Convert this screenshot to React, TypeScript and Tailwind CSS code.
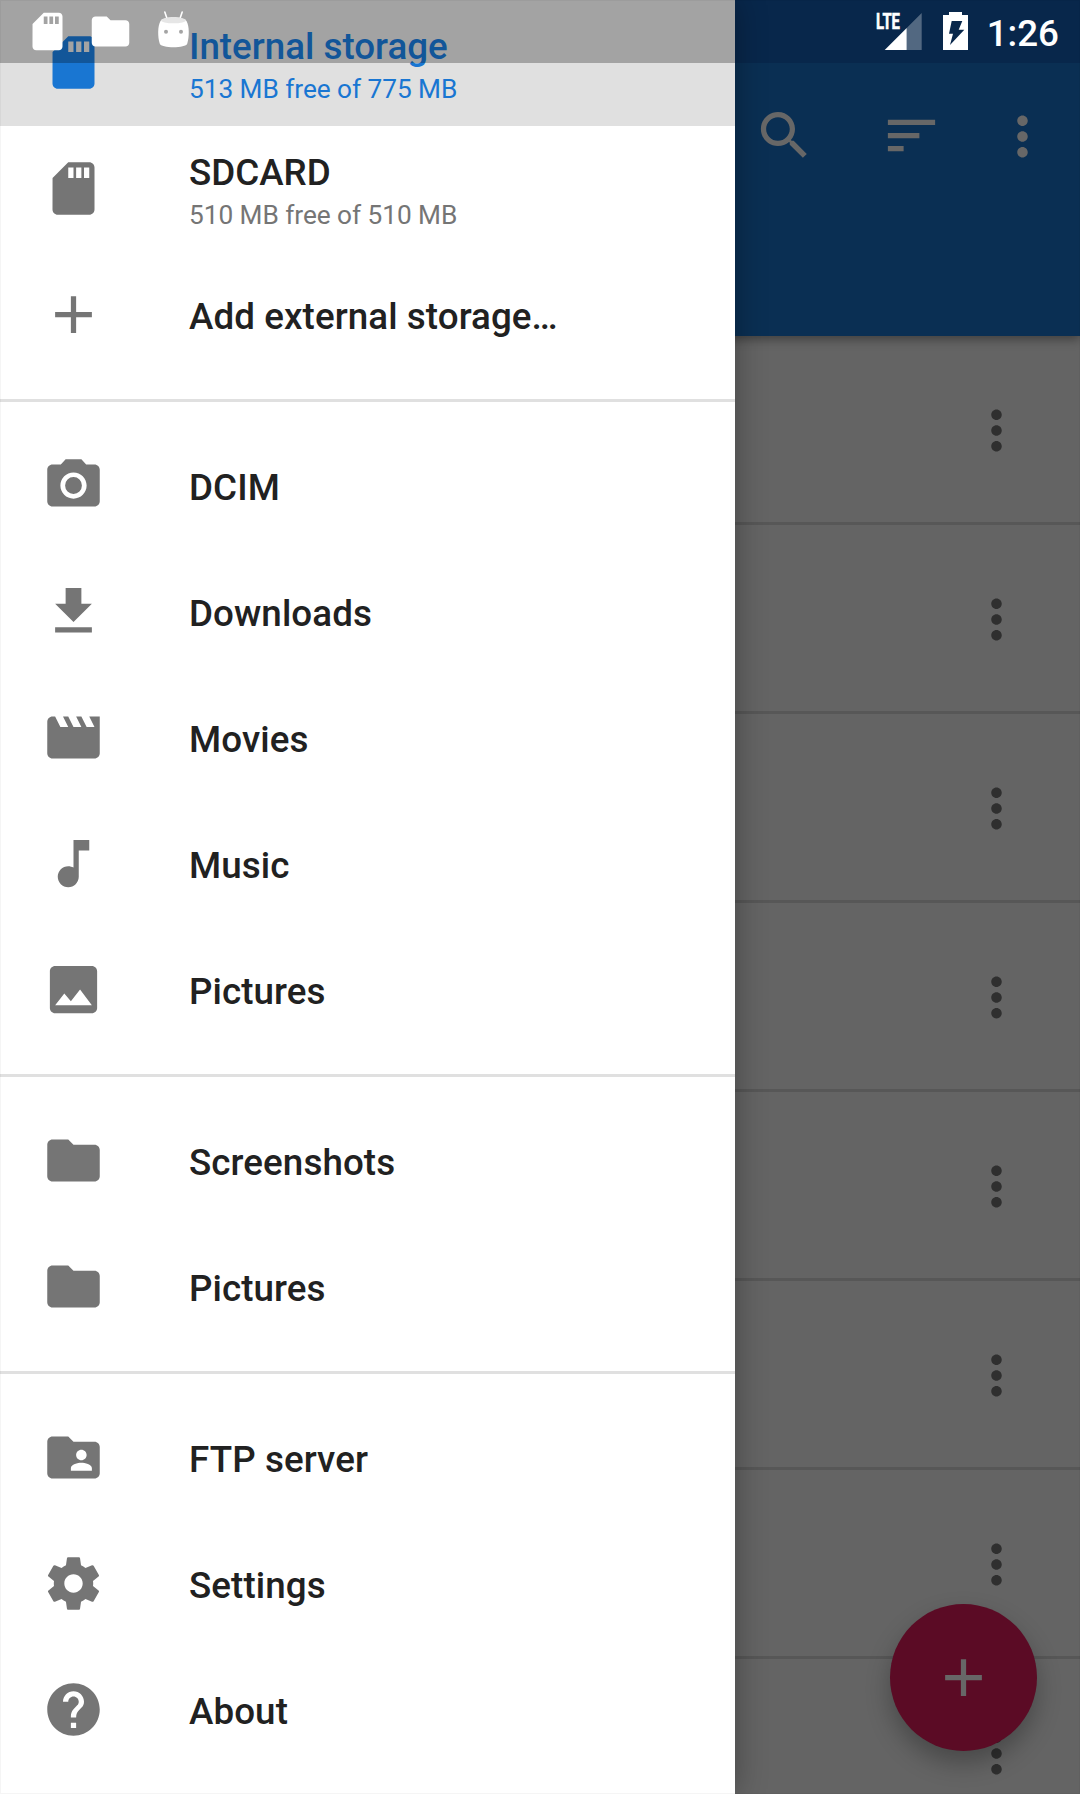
import React from "react";

const PATHS = {
  sd: "M18 2h-8L4.02 8 4 20c0 1.1.9 2 2 2h12c1.1 0 2-.9 2-2V4c0-1.1-.9-2-2-2zm-6 6h-2V4h2v4zm3 0h-2V4h2v4zm3 0h-2V4h2v4z",
  add: "M19 13h-6v6h-2v-6H5v-2h6V5h2v6h6v2z",
  camera:
    "M12 8.8a3.2 3.2 0 1 0 0 6.4 3.2 3.2 0 1 0 0-6.4zM9 2L7.17 4H4c-1.1 0-2 .9-2 2v12c0 1.1.9 2 2 2h16c1.1 0 2-.9 2-2V6c0-1.1-.9-2-2-2h-3.17L15 2H9zm3 15c-2.76 0-5-2.24-5-5s2.24-5 5-5 5 2.24 5 5-2.24 5-5 5z",
  download: "M19 9h-4V3H9v6H5l7 7 7-7zM5 18v2h14v-2H5z",
  movie:
    "M18 4l2 4h-3l-2-4h-2l2 4h-3l-2-4H8l2 4H7L5 4H4c-1.1 0-1.99.9-1.99 2L2 18c0 1.1.9 2 2 2h16c1.1 0 2-.9 2-2V4h-4z",
  music:
    "M12 3v10.55c-.59-.34-1.27-.55-2-.55-2.21 0-4 1.79-4 4s1.79 4 4 4 4-1.79 4-4V7h4V3h-6z",
  image:
    "M21 19V5c0-1.1-.9-2-2-2H5c-1.1 0-2 .9-2 2v14c0 1.1.9 2 2 2h14c1.1 0 2-.9 2-2zM8.5 13.5l2.5 3.01L14.5 12l4.5 6H5l3.5-4.5z",
  folder:
    "M10 4H4c-1.1 0-1.99.9-1.99 2L2 18c0 1.1.9 2 2 2h16c1.1 0 2-.9 2-2V8c0-1.1-.9-2-2-2h-8l-2-2z",
  folderShared:
    "M20 6h-8l-2-2H4c-1.1 0-1.99.9-1.99 2L2 18c0 1.1.9 2 2 2h16c1.1 0 2-.9 2-2V8c0-1.1-.9-2-2-2zm-5 3c1.1 0 2 .9 2 2s-.9 2-2 2-2-.9-2-2 .9-2 2-2zm4 8h-8v-1c0-1.33 2.67-2 4-2s4 .67 4 2v1z",
  settings:
    "M19.43 12.98c.04-.32.07-.64.07-.98s-.03-.66-.07-.98l2.11-1.65c.19-.15.24-.42.12-.64l-2-3.46c-.12-.22-.39-.3-.61-.22l-2.49 1c-.52-.4-1.08-.73-1.69-.98l-.38-2.65C14.46 2.18 14.25 2 14 2h-4c-.25 0-.46.18-.49.42l-.38 2.65c-.61.25-1.17.59-1.69.98l-2.49-1c-.23-.09-.49 0-.61.22l-2 3.46c-.13.22-.07.49.12.64l2.11 1.65c-.04.32-.07.65-.07.98s.03.66.07.98l-2.11 1.65c-.19.15-.24.42-.12.64l2 3.46c.12.22.39.3.61.22l2.49-1c.52.4 1.08.73 1.69.98l.38 2.65c.03.24.24.42.49.42h4c.25 0 .46-.18.49-.42l.38-2.65c.61-.25 1.17-.59 1.69-.98l2.49 1c.23.09.49 0 .61-.22l2-3.46c.12-.22.07-.49-.12-.64l-2.11-1.65zM12 15.5c-1.93 0-3.5-1.57-3.5-3.5s1.57-3.5 3.5-3.5 3.5 1.57 3.5 3.5-1.57 3.5-3.5 3.5z",
  help: "M12 2C6.48 2 2 6.48 2 12s4.48 10 10 10 10-4.48 10-10S17.52 2 12 2zm1 17h-2v-2h2v2zm2.07-7.75l-.9.92C13.45 12.9 13 13.5 13 15h-2v-.5c0-1.1.45-2.1 1.17-2.83l1.24-1.26c.37-.36.59-.86.59-1.41 0-1.1-.9-2-2-2s-2 .9-2 2H8c0-2.21 1.79-4 4-4s4 1.79 4 4c0 .88-.36 1.68-.93 2.25z",
  more: "M12 8c1.1 0 2-.9 2-2s-.9-2-2-2-2 .9-2 2 .9 2 2 2zm0 2c-1.1 0-2 .9-2 2s.9 2 2 2 2-.9 2-2-.9-2-2-2zm0 6c-1.1 0-2 .9-2 2s.9 2 2 2 2-.9 2-2-.9-2-2-2z",
  search:
    "M15.5 14h-.79l-.28-.27C15.41 12.59 16 11.11 16 9.5 16 5.91 13.09 3 9.5 3S3 5.91 3 9.5 5.91 16 9.5 16c1.61 0 3.09-.59 4.23-1.57l.27.28v.79l5 4.99L20.49 19l-4.99-5zm-6 0C7.01 14 5 11.99 5 9.5S7.01 5 9.5 5 14 7.01 14 9.5 11.99 14 9.5 14z",
  sort: "M3 18h6v-2H3v2zM3 6v2h18V6H3zm0 7h12v-2H3v2z",
};

type IconName = keyof typeof PATHS;

function Icon({ name, className = "" }: { name: IconName; className?: string }) {
  return (
    <svg viewBox="0 0 24 24" fill="currentColor" fillRule="evenodd" className={`size-[63px] shrink-0 ${className}`}>
      <path d={PATHS[name]} />
    </svg>
  );
}

type Item = { icon: IconName; title: string; detail?: string; active?: boolean };

const GROUPS: Item[][] = [
  [
    { icon: "sd", title: "Internal storage", detail: "513 MB free of 775 MB", active: true },
    { icon: "sd", title: "SDCARD", detail: "510 MB free of 510 MB" },
    { icon: "add", title: "Add external storage…" },
  ],
  [
    { icon: "camera", title: "DCIM" },
    { icon: "download", title: "Downloads" },
    { icon: "movie", title: "Movies" },
    { icon: "music", title: "Music" },
    { icon: "image", title: "Pictures" },
  ],
  [
    { icon: "folder", title: "Screenshots" },
    { icon: "folder", title: "Pictures" },
  ],
  [
    { icon: "folderShared", title: "FTP server" },
    { icon: "settings", title: "Settings" },
    { icon: "help", title: "About" },
  ],
];

function DrawerItem({ icon, title, detail, active }: Item) {
  return (
    <li className={`flex h-[126px] items-center pl-[42px] ${active ? "bg-[#e0e0e0] text-[#1976d2]" : "text-[#212121]"}`}>
      <Icon name={icon} className={`mb-px ${active ? "" : "text-[#757575]"}`} />
      <div className={`ml-[84px] flex flex-col ${detail ? "pt-2" : "pt-0.5 tracking-[0.08px]"}`}>
        <span className="text-[36.75px] leading-[43px] font-medium whitespace-nowrap">{title}</span>
        {detail && (
          <span className={`text-[26.25px] leading-[42px] tracking-[-0.05px] whitespace-nowrap ${active ? "" : "text-[#757575]"}`}>{detail}</span>
        )}
      </div>
    </li>
  );
}

function Drawer() {
  return (
    <nav className="absolute inset-y-0 left-0 w-[735px] bg-white shadow-[0_0_30px_rgba(0,0,0,0.32)]">
      {GROUPS.map((group, i) => (
        <ul key={i} className={i > 0 ? "mt-[21px] border-t-[3px] border-[#e0e0e0] pt-[21px]" : ""}>
          {group.map((item, j) => (
            <DrawerItem key={j} {...item} />
          ))}
        </ul>
      ))}
    </nav>
  );
}

function StatusBar() {
  return (
    <div className="absolute inset-x-0 top-0 flex h-[63px] text-white">
      <div className="flex w-[735px] bg-black/27 pt-[8.5px] pl-[25px]">
        <svg viewBox="0 0 24 24" fill="currentColor" className="mr-[18px] size-[45px]">
          <path d={PATHS.sd} />
        </svg>
        <svg viewBox="0 0 24 24" fill="currentColor" className="mr-[18px] size-[45px]">
          <path d={PATHS.folder} />
        </svg>
        <svg viewBox="0 0 45 45" className="size-[45px]">
          <path d="M16 9.500l-2.200-6.500M29 9.500l2.200-6.500" stroke="#fff" strokeWidth="1.600" strokeLinecap="round" />
          <path d="M9.500 12C14 7 31 7 35.500 12C38.500 17 38.300 28 36.300 34.500C35 39.500 10 39.500 8.700 34.500C6.700 28 6.500 17 9.500 12z" fill="#fff" />
          <ellipse cx="22.500" cy="11.300" rx="12.500" ry="3" fill="#e6e6e6" />
          <circle cx="15" cy="22.800" r="2" fill="#a4a4a4" />
          <circle cx="30" cy="22.800" r="2" fill="#a4a4a4" />
        </svg>
      </div>
      <div className="flex flex-1 justify-end pt-3 pr-[21px]">
        <svg viewBox="0 -8 48 48" className="-mt-2 mr-[20px] h-12 w-12">
          <path d="M46.700 1v37H31.700V16z" fill="#fff" opacity=".3" />
          <path d="M9.700 38L31.700 16v22z" fill="#fff" />
          <text
            x="1"
            y="17"
            fontSize="22"
            fontWeight="700"
            fill="#fff"
            stroke="#fff"
            strokeWidth="0.6"
            textLength="24"
            lengthAdjust="spacingAndGlyphs"
          >
            LTE
          </text>
        </svg>
        <svg viewBox="0 0 26 38" className="mr-[18px] h-[38px] w-[26px]">
          <path fillRule="evenodd" fill="#fff" d="M6 0h13v3h6v35H0V3h6zM8.700 9h10.600l-3.600 8.700h5.600L7 33l3-11.300H6z" />
        </svg>
        <span className="text-[36.75px] leading-[43px] font-medium">1:26</span>
      </div>
    </div>
  );
}

export default function App() {
  return (
    <div className="relative h-[1794px] w-[1080px] overflow-hidden bg-[#646464] font-[Roboto,sans-serif]">
      <header className="relative h-[336px] bg-[#0a2f53] text-[#676767] shadow-[0_3px_10px_rgba(0,0,0,0.4)]">
        <div className="h-[63px] bg-[#08274b]" />
        <div className="flex h-[147px] items-center justify-end pr-[9px]">
          <div className="flex w-[126px] justify-center pr-0.5 pb-[3px]">
            <Icon name="search" />
          </div>
          <div className="flex w-[126px] justify-center pb-[3px]">
            <Icon name="sort" />
          </div>
          <div className="flex w-[97px] justify-center">
            <Icon name="more" />
          </div>
        </div>
      </header>
      <main>
        {Array.from({ length: 8 }, (_, i) => (
          <div key={i} className="flex h-[189px] items-center justify-end border-b-[3px] border-[#575757] pt-[3px] pr-[52px] text-[#2f2f2f]">
            <Icon name="more" />
          </div>
        ))}
      </main>
      <button className="absolute top-[1604px] left-[890px] flex size-[147px] items-center justify-center rounded-full bg-[#5b0b25] text-[#676767] shadow-[0_12px_24px_rgba(0,0,0,0.28)]">
        <Icon name="add" />
      </button>
      <Drawer />
      <StatusBar />
      <div className="pointer-events-none absolute inset-0 border border-black/4" />
    </div>
  );
}
